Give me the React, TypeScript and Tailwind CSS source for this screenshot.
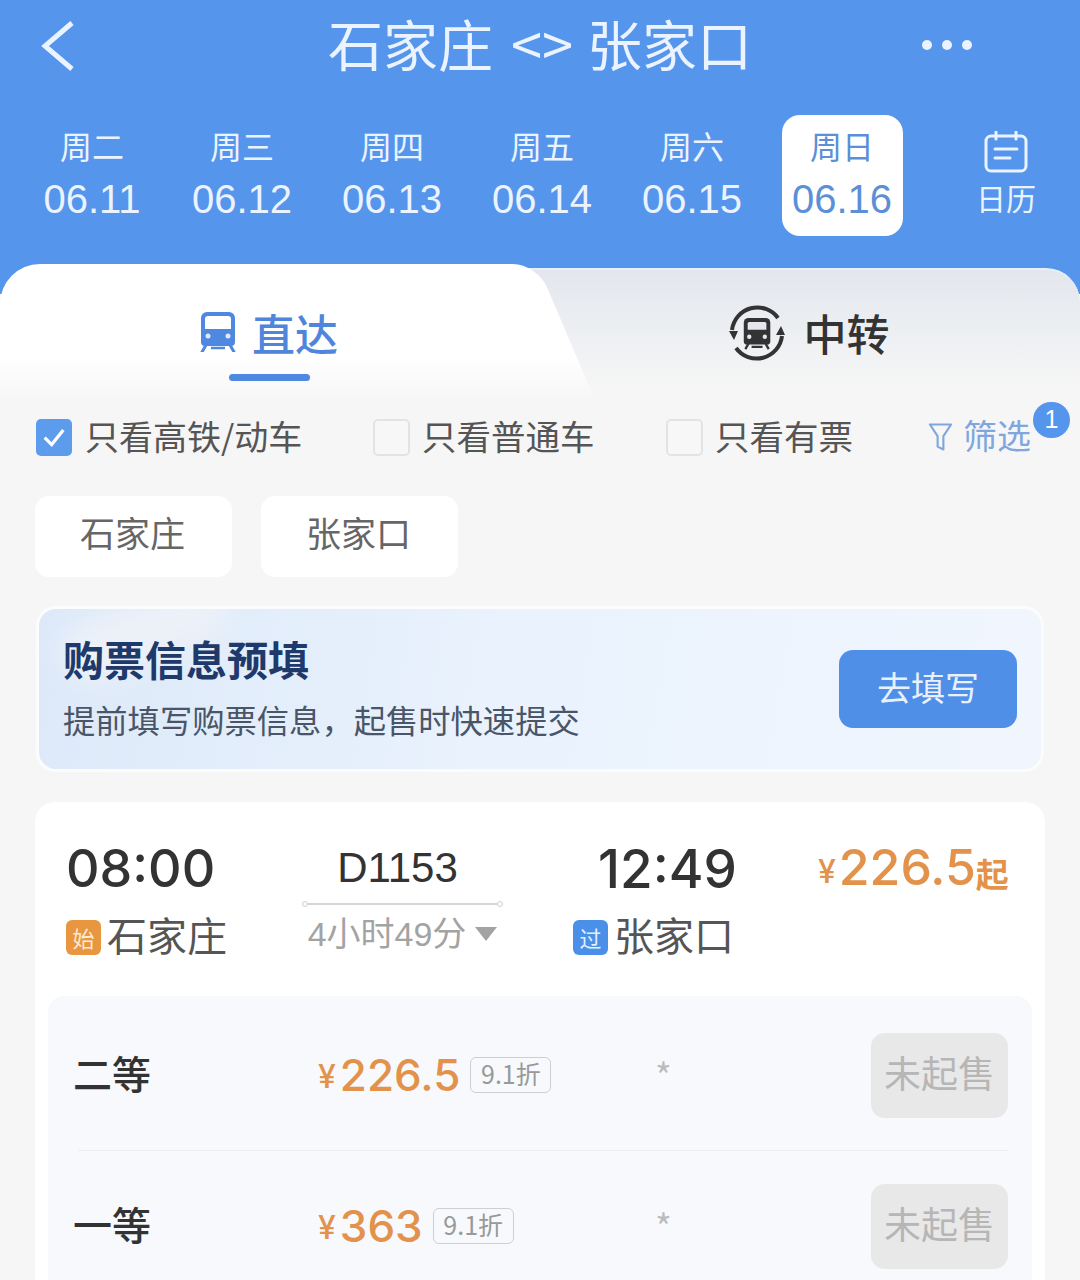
import React from 'react';

const DAYS = [
  { week: '周二', date: '06.11' },
  { week: '周三', date: '06.12' },
  { week: '周四', date: '06.13' },
  { week: '周五', date: '06.14' },
  { week: '周六', date: '06.15' },
  { week: '周日', date: '06.16', active: true },
];

function TrainIcon({ className }: { className?: string }) {
  return (
    <svg viewBox="0 0 36 40" className={className}>
      <path d="M7 0h22a6 6 0 0 1 6 6v24a4 4 0 0 1-4 4H5a4 4 0 0 1-4-4V6a6 6 0 0 1 6-6z" fill="#4f88e0" />
      <path d="M8 4h20a3 3 0 0 1 3 3v10H5V7a3 3 0 0 1 3-3z" fill="#fff" />
      <circle cx="8" cy="24" r="2.500" fill="#dfeafa" />
      <circle cx="28" cy="24" r="2.500" fill="#dfeafa" />
      <path d="M6 33l-4 7M30 33l4 7" stroke="#4f88e0" strokeWidth="3" strokeLinecap="round" />
      <path d="M11 36h14" stroke="#4f88e0" strokeWidth="2.500" />
    </svg>
  );
}

function TransferIcon({ className }: { className?: string }) {
  return (
    <svg viewBox="0 0 56 56" className={className} fill="none">
      <path d="M3 25A25.500 25.500 0 0 1 49 13" stroke="#333" strokeWidth="4" />
      <path d="M53 31A25.500 25.500 0 0 1 7 43" stroke="#333" strokeWidth="4" />
      <path d="M0 26h9l-4 9zM47 30h9l-4-9z" fill="#333" />
      <g transform="translate(14 13) scale(0.78)">
        <path d="M7 0h22a6 6 0 0 1 6 6v24a4 4 0 0 1-4 4H5a4 4 0 0 1-4-4V6a6 6 0 0 1 6-6z" fill="#333" />
        <path d="M8 5h20a2 2 0 0 1 2 2v8H6V7a2 2 0 0 1 2-2z" fill="#e4e7ec" />
        <circle cx="8" cy="24" r="2.800" fill="#e4e7ec" />
        <circle cx="28" cy="24" r="2.800" fill="#e4e7ec" />
        <path d="M7 33l-4 7M29 33l4 7M11 37h14" stroke="#333" strokeWidth="3" />
      </g>
    </svg>
  );
}

function CalendarIcon({ className }: { className?: string }) {
  return (
    <svg viewBox="0 0 44 42" className={className} fill="none" stroke="#eaf3ff" strokeLinecap="round">
      <rect x="2" y="5" width="40" height="35" rx="5" strokeWidth="3" />
      <path d="M12 1v7M32 1v7" strokeWidth="3" />
      <path d="M11 18h22" strokeWidth="3" />
      <path d="M11 27h15" strokeWidth="3" />
    </svg>
  );
}

function Checkbox({ checked }: { checked?: boolean }) {
  if (checked) {
    return (
      <span className="flex h-[37px] w-[36px] shrink-0 items-center justify-center rounded-[5px] bg-[#5d9bec]">
        <svg viewBox="0 0 24 24" className="h-[28px] w-[28px]" fill="none" stroke="#fff" strokeWidth="2.800">
          <path d="M4 12.500l6 6L20 6" />
        </svg>
      </span>
    );
  }
  return <span className="h-[37px] w-[37px] shrink-0 rounded-[5px] border-2 border-[#e3e3e3] bg-[#f7f7f7]" />;
}

function SeatRow({ name, price, seat }: { name: string; price: string; seat: string }) {
  return (
    <div className="flex h-[150px] items-center pl-[25px] pr-[24px]">
      <span className="w-[245px] pb-[6px] text-[39px] font-medium leading-[50px] text-[#333]">{name}</span>
      <div className="flex w-[337px] items-center">
        <span className="mt-[4px] font-['Inter',sans-serif] text-[32px] font-medium leading-none text-[#e2924a]">¥</span>
        <span className="ml-[4px] font-['Inter',sans-serif] text-[44px] font-medium leading-none text-[#e2924a]">{price}</span>
        <span className="ml-[10px] flex h-[36px] w-[81px] items-center justify-center rounded-[6px] border border-[#cfcfcf] pb-[2px] text-[25px] text-[#999]">
          {seat}
        </span>
      </div>
      <span className="mb-[2px] text-[36px] leading-none text-[#bcbcbc]">*</span>
      <button className="ml-auto flex h-[85px] w-[137px] items-center justify-center rounded-[14px] bg-[#e8e8e8] pb-[5px] text-[37px] text-[#b6b6b6]">
        未起售
      </button>
    </div>
  );
}

export default function App() {
  return (
    <div className="h-[1280px] w-[1080px] overflow-hidden bg-[#f6f6f6] font-['Noto_Sans_CJK_SC',sans-serif]">
      {/* Blue header */}
      <div className="bg-[#5595ec]">
        <div className="relative flex h-[94px] items-center justify-center pb-[10px] text-[#eaf3ff]">
          <svg viewBox="0 0 36 52" className="absolute left-[39px] top-[20px] h-[52px] w-[36px]" fill="none" stroke="#eaf3ff" strokeWidth="5">
            <path d="M33 3L6 26l27 23" />
          </svg>
          <h1 className="flex items-center text-[55px] leading-none">
            <span>石家庄</span>
            <span className="ml-[18px] text-[56px]">&lt;&gt;</span>
            <span className="ml-[14px]">张家口</span>
          </h1>
          <div className="absolute left-[922px] top-[40px] flex gap-[10px]">
            <span className="h-[10px] w-[10px] rounded-full bg-[#eaf3ff]" />
            <span className="h-[10px] w-[10px] rounded-full bg-[#eaf3ff]" />
            <span className="h-[10px] w-[10px] rounded-full bg-[#eaf3ff]" />
          </div>
        </div>

        <div className="mt-[21px] flex pl-[17px]">
          {DAYS.map(d => (
            <div key={d.date} className="flex w-[150px] shrink-0 justify-center">
              <div className={`flex h-[121px] w-[121px] flex-col items-center rounded-[18px] pt-[10px] ${d.active ? 'bg-white text-[#5b8fd8]' : 'text-[#eaf3ff]'}`}>
                <span className="text-[32px] leading-[40px]">{d.week}</span>
                <span className="mt-[12px] font-['Liberation_Sans',sans-serif] text-[40px] leading-[44px]">{d.date}</span>
              </div>
            </div>
          ))}
          <div className="flex w-[178px] shrink-0 flex-col items-center pt-[16px]">
            <CalendarIcon className="h-[42px] w-[44px]" />
            <span className="mt-[4px] text-[30px] leading-[40px] text-[#eaf3ff]">日历</span>
          </div>
        </div>

        {/* Tabs */}
        <div className="mt-[28px] flex h-[136px] bg-[linear-gradient(#5595ec_0,#5595ec_30px,#f6f6f6_30px)]">
          <div className="relative z-10 flex w-[500px] shrink-0 flex-col items-center rounded-tl-[40px] bg-[linear-gradient(#fff_0,#fff_68%,#f6f6f6_100%)] pl-[38px] pt-[43px]">
            <div className="flex items-center gap-[16px]">
              <TrainIcon className="h-[40px] w-[36px]" />
              <span className="text-[43px] font-medium leading-[50px] text-[#4f86dc]">直达</span>
            </div>
            <span className="mt-[17px] h-[7px] w-[81px] rounded-full bg-[#4f88e0]" />
            <span className="absolute right-[-66px] top-0 -z-10 h-full w-[120px] skew-x-[23deg] rounded-tr-[24px] bg-[linear-gradient(#fff_0,#fff_68%,#f6f6f6_100%)]" />
          </div>
          <div className="mt-[4px] flex flex-1 items-start justify-center rounded-tr-[34px] border-t-2 border-[#e6f0fc] bg-[linear-gradient(#e3e7ed_0,#eef0f3_55%,#f6f6f6_90%)] pl-[38px] pt-[35px]">
            <div className="flex items-center gap-[19px]">
              <TransferIcon className="h-[56px] w-[56px]" />
              <span className="pb-[3px] text-[43px] font-medium leading-[50px] text-[#333]">中转</span>
            </div>
          </div>
        </div>
      </div>

      {/* Filters */}
      <div className="relative flex h-[74px] items-center pl-[36px] text-[34.5px] text-[#555]">
        <label className="flex w-[337px] items-center gap-[13px]">
          <Checkbox checked />
          <span className="pb-[3px] text-[34px] leading-[44px]">只看高铁/动车</span>
        </label>
        <label className="flex w-[293px] items-center gap-[12px]">
          <Checkbox />
          <span className="pb-[4px] leading-[44px]">只看普通车</span>
        </label>
        <label className="flex w-[262px] items-center gap-[12px]">
          <Checkbox />
          <span className="pb-[4px] leading-[44px]">只看有票</span>
        </label>
        <div className="flex items-center gap-[10px] text-[#7fa6de]">
          <svg viewBox="0 0 26 30" className="h-[30px] w-[25px]" fill="none" stroke="#7fa6de" strokeWidth="2.200" strokeLinejoin="round">
            <path d="M2 2h22l-8 12v14l-6-3V14z" />
          </svg>
          <span className="pb-[4px] text-[34px] leading-[44px]">筛选</span>
        </div>
        <span className="absolute left-[1033px] top-[2px] flex h-[36px] w-[37px] items-center justify-center rounded-full bg-[#5595ec] font-['Liberation_Sans',sans-serif] text-[25px] text-white">1</span>
      </div>

      {/* Station chips */}
      <div className="mt-[22px] flex gap-[29px] pl-[35px]">
        <div className="flex h-[81px] w-[197px] items-center justify-center rounded-[14px] bg-white pb-[8px] pr-[2px] text-[35px] text-[#666]">石家庄</div>
        <div className="flex h-[81px] w-[197px] items-center justify-center rounded-[14px] bg-white pb-[8px] pr-[2px] text-[35px] text-[#666]">张家口</div>
      </div>

      {/* Prefill banner */}
      <div className="relative mx-[36px] mt-[29px] flex h-[166px] items-center justify-between overflow-hidden rounded-[20px] border-[3px] border-[#fbfcfe] bg-[linear-gradient(100deg,#dde9f9_0%,#e9f2fd_45%,#f1f6fe_100%)] pl-[24px] pr-[24px]">
        <span className="absolute left-[20px] top-[-6px] h-[60px] w-[170px] -rotate-[20deg] rounded-full bg-[#ecf1f8] blur-[12px]" />
        <div className="relative mt-[-7px]">
          <p className="text-[41px] font-bold leading-[50px] text-[#20396b]">购票信息预填</p>
          <p className="mt-[16px] text-[32.3px] leading-[40px] text-[#4a5568]">提前填写购票信息，起售时快速提交</p>
        </div>
        <button className="relative flex h-[78px] w-[178px] items-center justify-center rounded-[14px] bg-[#4f8fe8] pb-[6px] text-[34px] text-[#e8f1fd]">去填写</button>
      </div>

      {/* Train card */}
      <div className="mx-[35px] mt-[30px] rounded-t-[20px] bg-white px-[13px]">
        <div className="flex pt-[38px]">
          <div className="w-[254px] pl-[18px]">
            <div className="font-['Inter',sans-serif] text-[52px] font-medium leading-[58px] text-[#333]">08:00</div>
            <div className="mt-[15px] flex items-center gap-[6px]">
              <span className="flex h-[35px] w-[35px] items-center justify-center rounded-[6px] bg-[#e8963f] text-[22px] text-[#fbe9d5]">始</span>
              <span className="pb-[6px] text-[40px] leading-[42px] text-[#555]">石家庄</span>
            </div>
          </div>
          <div className="flex w-[201px] flex-col items-center">
            <div className="mr-[10px] font-['Liberation_Sans',sans-serif] text-[42px] leading-[56px] text-[#333]">D1153</div>
            <div className="relative mt-[7px] h-[2px] w-full bg-[#d6d6d6]">
              <span className="absolute left-0 top-[-2px] h-[6px] w-[6px] rounded-full border border-[#cfcfcf] bg-white" />
              <span className="absolute right-0 top-[-2px] h-[6px] w-[6px] rounded-full border border-[#cfcfcf] bg-white" />
            </div>
            <div className="mt-[8px] flex items-center gap-[9px] text-[#a3a3a3]">
              <span className="font-['Liberation_Sans','Noto_Sans_CJK_SC',sans-serif] text-[34px] leading-[42px]">4小时49分</span>
              <span className="h-0 w-0 border-x-[11px] border-t-[14px] border-x-transparent border-t-[#a3a3a3]" />
            </div>
          </div>
          <div className="ml-[70px] w-[200px]">
            <div className="pl-[25px] font-['Inter',sans-serif] text-[53px] font-medium leading-[58px] text-[#333]">12:49</div>
            <div className="mt-[15px] flex items-center gap-[6px]">
              <span className="flex h-[35px] w-[35px] items-center justify-center rounded-[6px] bg-[#4a8fe8] text-[22px] text-[#e3effd]">过</span>
              <span className="pb-[6px] text-[40px] leading-[42px] text-[#555]">张家口</span>
            </div>
          </div>
          <div className="ml-[45px] flex h-[56px] items-end text-[#e2924a]">
            <span className="mb-[4px] font-['Inter',sans-serif] text-[32px] font-medium leading-[40px]">¥</span>
            <span className="mb-[1px] ml-[3px] font-['Inter',sans-serif] text-[50px] font-medium leading-[56px]">226.5</span>
            <span className="mb-[3px] text-[33px] font-bold leading-[40px]">起</span>
          </div>
        </div>

        <div className="mt-[35px] rounded-t-[16px] bg-[#f7f9fc] pt-[4px]">
          <SeatRow name="二等" price="226.5" seat="9.1折" />
          <div className="ml-[30px] mr-[24px] h-px bg-[#eceef1]" />
          <SeatRow name="一等" price="363" seat="9.1折" />
        </div>
      </div>
    </div>
  );
}
